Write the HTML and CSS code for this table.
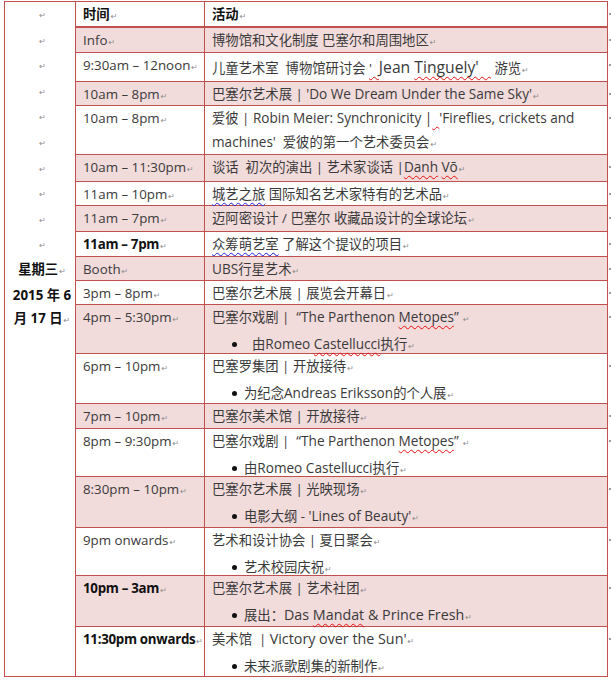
FILE: index.html
```html
<!DOCTYPE html>
<html lang="zh-CN">
<head>
<meta charset="utf-8">
<title>日程</title>
<link rel="stylesheet" href="styles.css">
</head>
<body>
<div class="tbl">
  <div class="side">
    <div><span class="pm">↵</span></div>
    <div><span class="pm">↵</span></div>
    <div><span class="pm">↵</span></div>
    <div><span class="pm">↵</span></div>
    <div><span class="pm">↵</span></div>
    <div><span class="pm">↵</span></div>
    <div><span class="pm">↵</span></div>
    <div><span class="pm">↵</span></div>
    <div><span class="pm">↵</span></div>
    <div><span class="pm">↵</span></div>
    <div>星期三<span class="pm">↵</span></div>
    <div>2015 年 6</div>
    <div>月 17 日<span class="pm">↵</span></div>
  </div>

  <div class="c c2 hd">时间<span class="pm">↵</span></div>
  <div class="c c3 hd">活动<span class="pm">↵</span></div>

  <div class="c c2 p">Info<span class="pm">↵</span></div>
  <div class="c c3 p">博物馆和文化制度 巴塞尔和周围地区<span class="pm">↵</span></div>

  <div class="c c2">9:30am – 12noon<span class="pm">↵</span></div>
  <div class="c c3 tall">儿童艺术室&nbsp; 博物馆研讨会 <span class="sq">'&nbsp; </span><span class="big">Jean <span class="sq">Tinguely'&nbsp;&nbsp;&nbsp;</span></span> 游览<span class="pm">↵</span></div>

  <div class="c c2 p">10am – 8pm<span class="pm">↵</span></div>
  <div class="c c3 p">巴塞尔艺术展 | <span class="en">'Do We Dream Under the Same Sky'</span><span class="pm">↵</span></div>

  <div class="c c2">10am – 8pm<span class="pm">↵</span></div>
  <div class="c c3">爱彼 | <span class="en">Robin Meier: Synchronicity |<span class="sq">&nbsp; </span>'Fireflies, crickets and machines'</span>&nbsp; 爱彼的第一个艺术委员会<span class="pm">↵</span></div>

  <div class="c c2 p">10am – 11:30pm<span class="pm">↵</span></div>
  <div class="c c3 p">谈话&nbsp; 初次的演出 | 艺术家谈话 |<span class="en"><span class="sq">Danh</span> <span class="sq">Vō</span></span><span class="pm">↵</span></div>

  <div class="c c2">11am – 10pm<span class="pm">↵</span></div>
  <div class="c c3"><span class="sqb">城艺之旅</span> 国际知名艺术家特有的艺术品<span class="pm">↵</span></div>

  <div class="c c2 p">11am – 7pm<span class="pm">↵</span></div>
  <div class="c c3 p">迈阿密设计 / 巴塞尔 收藏品设计的全球论坛<span class="pm">↵</span></div>

  <div class="c c2 b">11am – 7pm<span class="pm">↵</span></div>
  <div class="c c3"><span class="sqb">众筹萌艺室</span> 了解这个提议的项目<span class="pm">↵</span></div>

  <div class="c c2 p">Booth<span class="pm">↵</span></div>
  <div class="c c3 p"><span class="en">UBS</span>行星艺术<span class="pm">↵</span></div>

  <div class="c c2">3pm – 8pm<span class="pm">↵</span></div>
  <div class="c c3">巴塞尔艺术展 | 展览会开幕日<span class="pm">↵</span></div>

  <div class="c c2 p">4pm – 5:30pm<span class="pm">↵</span></div>
  <div class="c c3 p">
    <div>巴塞尔戏剧 |&nbsp; <span class="en">“The Parthenon <span class="sq">Metopes</span>”</span> <span class="pm">↵</span></div>
    <div class="li wide"><i class="dot"></i>由<span class="en">Romeo <span class="sq">Castellucci</span></span>执行<span class="pm">↵</span></div>
  </div>

  <div class="c c2">6pm – 10pm<span class="pm">↵</span></div>
  <div class="c c3">
    <div>巴塞罗集团 | 开放接待<span class="pm">↵</span></div>
    <div class="li"><i class="dot"></i>为纪念<span class="en">Andreas Eriksson</span>的个人展<span class="pm">↵</span></div>
  </div>

  <div class="c c2 p">7pm – 10pm<span class="pm">↵</span></div>
  <div class="c c3 p">巴塞尔美术馆 | 开放接待<span class="pm">↵</span></div>

  <div class="c c2">8pm – 9:30pm<span class="pm">↵</span></div>
  <div class="c c3">
    <div>巴塞尔戏剧 |&nbsp; <span class="en">“The Parthenon <span class="sq">Metopes</span>”</span> <span class="pm">↵</span></div>
    <div class="li"><i class="dot"></i>由<span class="en">Romeo <span class="sq">Castellucci</span></span>执行<span class="pm">↵</span></div>
  </div>

  <div class="c c2 p">8:30pm – 10pm<span class="pm">↵</span></div>
  <div class="c c3 p">
    <div>巴塞尔艺术展 | 光映现场<span class="pm">↵</span></div>
    <div class="li"><i class="dot"></i>电影大纲 - <span class="en">'Lines of Beauty'</span><span class="pm">↵</span></div>
  </div>

  <div class="c c2">9pm onwards<span class="pm">↵</span></div>
  <div class="c c3">
    <div>艺术和设计协会 | 夏日聚会<span class="pm">↵</span></div>
    <div class="li"><i class="dot"></i>艺术校园庆祝<span class="pm">↵</span></div>
  </div>

  <div class="c c2 p b">10pm – 3am<span class="pm">↵</span></div>
  <div class="c c3 p">
    <div>巴塞尔艺术展 | 艺术社团<span class="pm">↵</span></div>
    <div class="li"><i class="dot"></i>展出：<span class="lg">Das <span class="sq">Mandat</span> &amp; Prince Fresh</span><span class="pm">↵</span></div>
  </div>

  <div class="c c2 b">11:30pm onwards<span class="pm">↵</span></div>
  <div class="c c3">
    <div>美术馆&nbsp; | <span class="lg">Victory over the Sun'</span><span class="pm">↵</span></div>
    <div class="li"><i class="dot"></i>未来派歌剧集的新制作<span class="pm">↵</span></div>
  </div>
</div>
</body>
</html>
```

FILE: styles.css
```css
html, body {
  margin: 0;
  padding: 0;
  background: #ffffff;
  overflow: hidden;
}

body {
  font-family: "Open Sans", "Noto Sans CJK SC", sans-serif;
  font-size: 13.33px;
  color: #3a3a3a;
}

.tbl {
  display: grid;
  grid-template-columns: 71px 129px 403px;
  grid-template-rows: 26px 25px 29px 24px 49px 27px 24px 26px 25px 24px 24px 49px 50px 25px 48px 51px 48px 51px 50px;
  width: max-content;
  margin: 1px 0 0 4px;
  border-left: 1px solid #c0504d;
  border-top: 1px solid #c0504d;
}

.side {
  grid-column: 1;
  grid-row: 1 / -1;
  box-sizing: border-box;
  border-right: 1px solid #c0504d;
  border-bottom: 1px solid #c0504d;
  text-align: center;
  font-weight: bold;
  color: #111111;
  line-height: 23.6px;
  padding-left: 4px;
}

.c {
  box-sizing: border-box;
  border-right: 1px solid #c0504d;
  border-bottom: 1px solid #c0504d;
  padding: 0 4px 0 7px;
  line-height: 24px;
}

.c2 {
  white-space: nowrap;
}

.c3 {
  position: relative;
}

.c3::after {
  content: "";
  position: absolute;
  right: -5px;
  top: 11px;
  width: 3px;
  height: 2px;
  background: #a0a0a0;
}

.hd {
  border-bottom-width: 2px;
  font-weight: bold;
  color: #111111;
}

.p {
  background: #f2dbdb;
}

.b {
  font-weight: bold;
  color: #111111;
  letter-spacing: -0.3px;
}

.tall {
  line-height: 28px;
}

.big {
  font-size: 15.7px;
}

.en {
  font-size: 13.6px;
}

.lg {
  font-size: 14.3px;
}

.pm {
  font-family: "DejaVu Sans", sans-serif;
  font-size: 8px;
  font-weight: normal;
  letter-spacing: 0;
  color: #8c8c8c;
  margin-left: 1px;
}

.li {
  padding-left: 20px;
}

.dot {
  display: inline-block;
  width: 5px;
  height: 5px;
  border-radius: 50%;
  background: #111111;
  vertical-align: middle;
  margin-right: 7px;
  position: relative;
  top: -1px;
}

.li.wide .dot {
  margin-right: 15px;
}

.sq {
  text-decoration: underline wavy #e81010;
  text-decoration-thickness: 1px;
  text-underline-offset: 3px;
  text-decoration-skip-ink: none;
}

.sqb {
  text-decoration: underline wavy #2020e0;
  text-decoration-thickness: 1px;
  text-underline-offset: 3px;
  text-decoration-skip-ink: none;
}
```
